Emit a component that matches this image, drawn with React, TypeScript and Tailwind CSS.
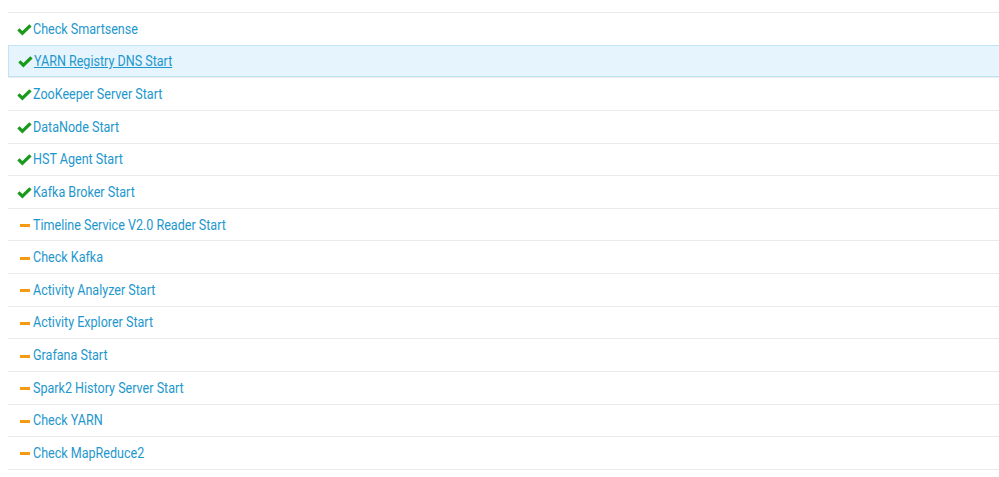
import React from "react";

const rows: { name: string; ok: boolean; active?: boolean }[] = [
  { name: "Check Smartsense", ok: true },
  { name: "YARN Registry DNS Start", ok: true, active: true },
  { name: "ZooKeeper Server Start", ok: true },
  { name: "DataNode Start", ok: true },
  { name: "HST Agent Start", ok: true },
  { name: "Kafka Broker Start", ok: true },
  { name: "Timeline Service V2.0 Reader Start", ok: false },
  { name: "Check Kafka", ok: false },
  { name: "Activity Analyzer Start", ok: false },
  { name: "Activity Explorer Start", ok: false },
  { name: "Grafana Start", ok: false },
  { name: "Spark2 History Server Start", ok: false },
  { name: "Check YARN", ok: false },
  { name: "Check MapReduce2", ok: false },
];

function Check() {
  return (
    <svg width="15" height="12" viewBox="0 0 15 12" className="shrink-0">
      <path d="M0.3 6.4 L2.5 4.2 L5.4 7 L12.3 0.2 L14.6 2.5 L5.4 11.6 Z" fill="#1a9a1a" />
    </svg>
  );
}

function Dash() {
  return <span className="block w-[10px] h-[3px] bg-[#f59a12] ml-[3px] mr-[2px] shrink-0" />;
}

export default function App() {
  return (
    <div
      className="w-[999px] h-[477px] bg-white pt-[12px] pl-[8px]"
      style={{ fontFamily: "Roboto, 'Liberation Sans', sans-serif" }}
    >
      <div className="border-b border-[#ebebeb]">
        {rows.map((r) => (
          <div
            key={r.name}
            className={
              "h-[32.64px] flex items-center pl-[9px] pt-[2px] text-[14.6px] text-[#1e97cd] " +
              (r.active
                ? "bg-[#e6f5fd] border border-r-0 border-[#c0e4f6]"
                : "border-t border-[#ebebeb]")
            }
          >
            <span className="w-[15px] flex items-center mr-[1px]">
              {r.ok ? <Check /> : <Dash />}
            </span>
            <span
              className={
                "inline-block origin-left scale-x-[0.86] whitespace-nowrap " +
                (r.active ? "underline" : "")
              }
            >
              {r.name}
            </span>
          </div>
        ))}
      </div>
    </div>
  );
}
